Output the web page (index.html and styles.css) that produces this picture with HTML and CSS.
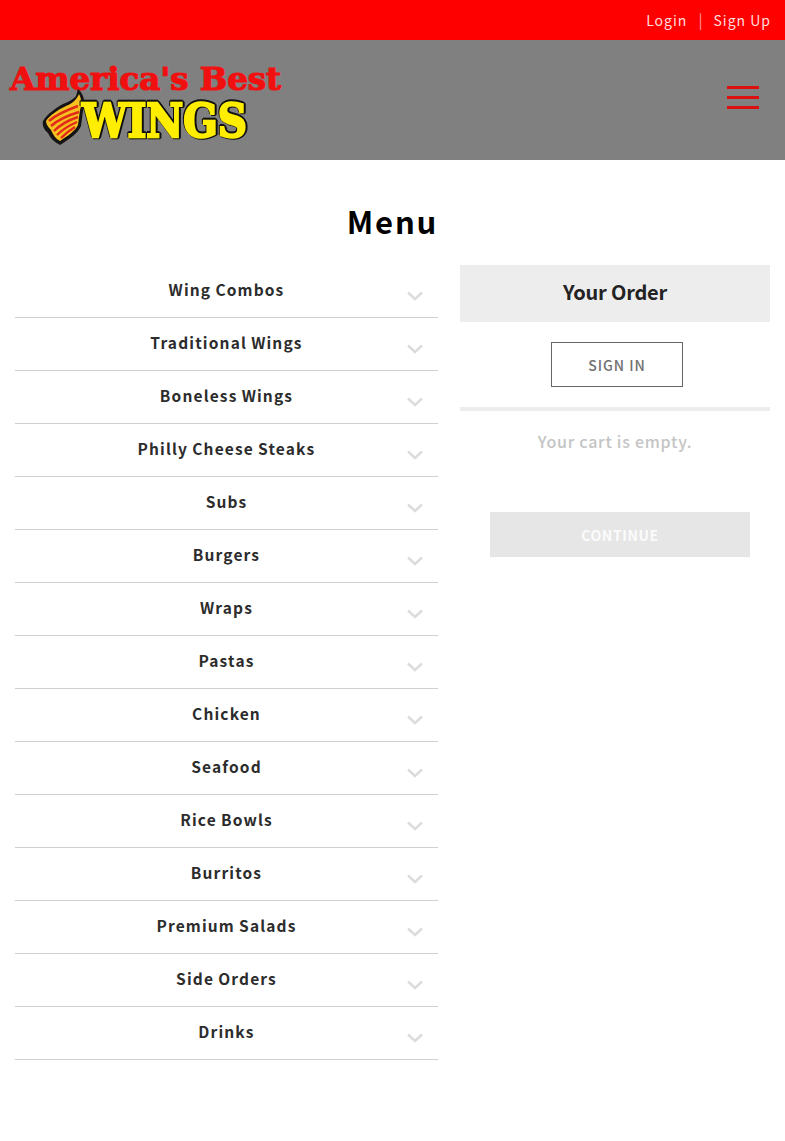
FILE: index.html
```html
<!DOCTYPE html>
<html lang="en">
<head>
<meta charset="utf-8">
<title>Menu</title>
<link rel="stylesheet" href="styles.css">
</head>
<body>
<div class="topbar">
  <a class="toplink">Login</a><span class="topsep">|</span><a class="toplink">Sign Up</a>
</div>
<header class="header">
  <svg class="logo" width="274" height="84" viewBox="0 0 274 84" xmlns="http://www.w3.org/2000/svg">
    <text class="logo-top" x="1" y="27" textLength="271" lengthAdjust="spacingAndGlyphs">America's Best</text>
    <path d="M69 26 C75 31 77 40 74 48 L72 63 C69 70 62 75 51 82 C45 79 41 75 39 70 C35 67 33 62 34 58 C38 51 47 45 54 41 C61 38 65 36 67 33 Z" fill="#141414"/>
    <path d="M70 31 C73 37 73 42 71 47 L69 62 C66 68 60 72 51 78 C47 76 44 72 42 67 C39 64 37 61 37 58 C41 52 49 47 55 44 C62 41 67 38 70 31 Z" fill="#f5c020"/>
    <path d="M40 58 C48 51 58 47 69 43 M42 63 C50 56 60 52 70 49 M45 68 C52 61 60 57 69 54 M48 72 C54 66 61 62 68 59 M52 75 C57 70 61 67 66 64" fill="none" stroke="#e22a18" stroke-width="2.4"/>
    <text class="logo-wings" x="73" y="74" textLength="165" lengthAdjust="spacingAndGlyphs">WINGS</text>
  </svg>
  <button class="burger" aria-label="Menu"><span></span><span></span><span></span></button>
</header>
<main class="page">
  <h1 class="title">Menu</h1>
  <div class="columns">
    <ul class="menu">
      <li class="row"><span class="row-label">Wing Combos</span><svg class="chev" width="16" height="10" viewBox="0 0 16 10"><path d="M1 1.5 L8 8 L15 1.5" /></svg></li>
      <li class="row"><span class="row-label">Traditional Wings</span><svg class="chev" width="16" height="10" viewBox="0 0 16 10"><path d="M1 1.5 L8 8 L15 1.5" /></svg></li>
      <li class="row"><span class="row-label">Boneless Wings</span><svg class="chev" width="16" height="10" viewBox="0 0 16 10"><path d="M1 1.5 L8 8 L15 1.5" /></svg></li>
      <li class="row"><span class="row-label">Philly Cheese Steaks</span><svg class="chev" width="16" height="10" viewBox="0 0 16 10"><path d="M1 1.5 L8 8 L15 1.5" /></svg></li>
      <li class="row"><span class="row-label">Subs</span><svg class="chev" width="16" height="10" viewBox="0 0 16 10"><path d="M1 1.5 L8 8 L15 1.5" /></svg></li>
      <li class="row"><span class="row-label">Burgers</span><svg class="chev" width="16" height="10" viewBox="0 0 16 10"><path d="M1 1.5 L8 8 L15 1.5" /></svg></li>
      <li class="row"><span class="row-label">Wraps</span><svg class="chev" width="16" height="10" viewBox="0 0 16 10"><path d="M1 1.5 L8 8 L15 1.5" /></svg></li>
      <li class="row"><span class="row-label">Pastas</span><svg class="chev" width="16" height="10" viewBox="0 0 16 10"><path d="M1 1.5 L8 8 L15 1.5" /></svg></li>
      <li class="row"><span class="row-label">Chicken</span><svg class="chev" width="16" height="10" viewBox="0 0 16 10"><path d="M1 1.5 L8 8 L15 1.5" /></svg></li>
      <li class="row"><span class="row-label">Seafood</span><svg class="chev" width="16" height="10" viewBox="0 0 16 10"><path d="M1 1.5 L8 8 L15 1.5" /></svg></li>
      <li class="row"><span class="row-label">Rice Bowls</span><svg class="chev" width="16" height="10" viewBox="0 0 16 10"><path d="M1 1.5 L8 8 L15 1.5" /></svg></li>
      <li class="row"><span class="row-label">Burritos</span><svg class="chev" width="16" height="10" viewBox="0 0 16 10"><path d="M1 1.5 L8 8 L15 1.5" /></svg></li>
      <li class="row"><span class="row-label">Premium Salads</span><svg class="chev" width="16" height="10" viewBox="0 0 16 10"><path d="M1 1.5 L8 8 L15 1.5" /></svg></li>
      <li class="row"><span class="row-label">Side Orders</span><svg class="chev" width="16" height="10" viewBox="0 0 16 10"><path d="M1 1.5 L8 8 L15 1.5" /></svg></li>
      <li class="row"><span class="row-label">Drinks</span><svg class="chev" width="16" height="10" viewBox="0 0 16 10"><path d="M1 1.5 L8 8 L15 1.5" /></svg></li>
    </ul>
    <aside class="order">
      <h2 class="order-head">Your Order</h2>
      <div class="signin-wrap"><a class="signin">SIGN IN</a></div>
      <p class="empty">Your cart is empty.</p>
      <div class="continue-wrap"><a class="continue">CONTINUE</a></div>
    </aside>
  </div>
</main>
</body>
</html>
```
FILE: styles.css
```css
* { box-sizing: border-box; }
html, body { margin: 0; padding: 0; }
body {
  background: #fff;
  font-family: "Noto Sans CJK SC", "Noto Sans", sans-serif;
  color: #222;
  height: 1141px;
  overflow: hidden;
}
.topbar {
  height: 40px;
  background: #ff0000;
  display: flex;
  justify-content: flex-end;
  align-items: center;
  padding-right: 14px;
  color: #fdd;
  font-size: 14px;
  line-height: 40px;
  letter-spacing: 1px;
}
.topsep { margin: 0 11px 0 11px; color: #ff9a9a; font-size: 15px; letter-spacing: 0; }
.header {
  height: 120px;
  background: #808080;
  display: flex;
  justify-content: space-between;
  align-items: flex-start;
  padding: 23px 26px 0 9px;
}
.logo { display: block; overflow: visible; }
.logo-top {
  font-family: "DejaVu Serif", serif;
  font-weight: 700;
  font-size: 32px;
  fill: #f01010;
  stroke: #f01010;
  stroke-width: 1.2px;
}
.logo-wings {
  font-family: "DejaVu Serif", serif;
  font-weight: 700;
  font-size: 47px;
  fill: #ffee00;
  stroke: #ffee00;
  stroke-width: 2.4px;
  filter: drop-shadow(1.5px 1.5px 0 #111) drop-shadow(-1px -1px 0 #111) drop-shadow(1px -1px 0 #111);
}
.burger {
  margin-top: 23px;
  width: 32px;
  height: 23px;
  padding: 0;
  border: 0;
  background: none;
  display: flex;
  flex-direction: column;
  justify-content: space-between;
}
.burger span { display: block; height: 3px; background: #dd1010; }
.page { padding: 0 15px; }
.title {
  margin: 0;
  padding-top: 39px;
  height: 105px;
  text-align: center;
  font-size: 31px;
  line-height: 44px;
  font-weight: 700;
  letter-spacing: 1.8px;
  color: #000;
}
.columns { display: flex; justify-content: space-between; align-items: flex-start; }
.menu { list-style: none; margin: 0; padding: 0; width: 423px; }
.row {
  position: relative;
  height: 53px;
  border-bottom: 1px solid #d0d0d0;
  text-align: center;
  font-size: 15.5px;
  line-height: 49px;
  font-weight: 700;
  letter-spacing: 1.15px;
  word-spacing: -0.5px;
  color: #2c2c2c;
}
.row-label { display: inline-block; }
.chev {
  position: absolute;
  left: 392px;
  top: 26px;
  fill: none;
  stroke: #dcdcdc;
  stroke-width: 2.5px;
}
.order { width: 310px; }
.order-head {
  margin: 0;
  height: 57px;
  background: #ededed;
  text-align: center;
  font-size: 20px;
  line-height: 53px;
  font-weight: 700;
  letter-spacing: -0.2px;
  color: #222;
}
.signin-wrap {
  display: flex;
  justify-content: flex-start;
  padding: 20px 0;
  border-bottom: 4px solid #ededed;
}
.signin {
  margin-left: 91px;
  width: 132px;
  height: 45px;
  border: 1px solid #666;
  text-align: center;
  font-size: 14px;
  line-height: 44px;
  font-weight: 500;
  letter-spacing: 1px;
  color: #707070;
}
.empty {
  margin: 0;
  height: 101px;
  padding-top: 16px;
  text-align: center;
  font-size: 16px;
  line-height: 28px;
  font-weight: 500;
  letter-spacing: 0.75px;
  color: #c4c4c4;
}
.continue-wrap { padding: 0 20px 0 30px; }
.continue {
  display: block;
  height: 45px;
  background: #e6e6e6;
  text-align: center;
  font-size: 14px;
  line-height: 46px;
  font-weight: 700;
  letter-spacing: 0.6px;
  color: #fbfbfb;
}
```
